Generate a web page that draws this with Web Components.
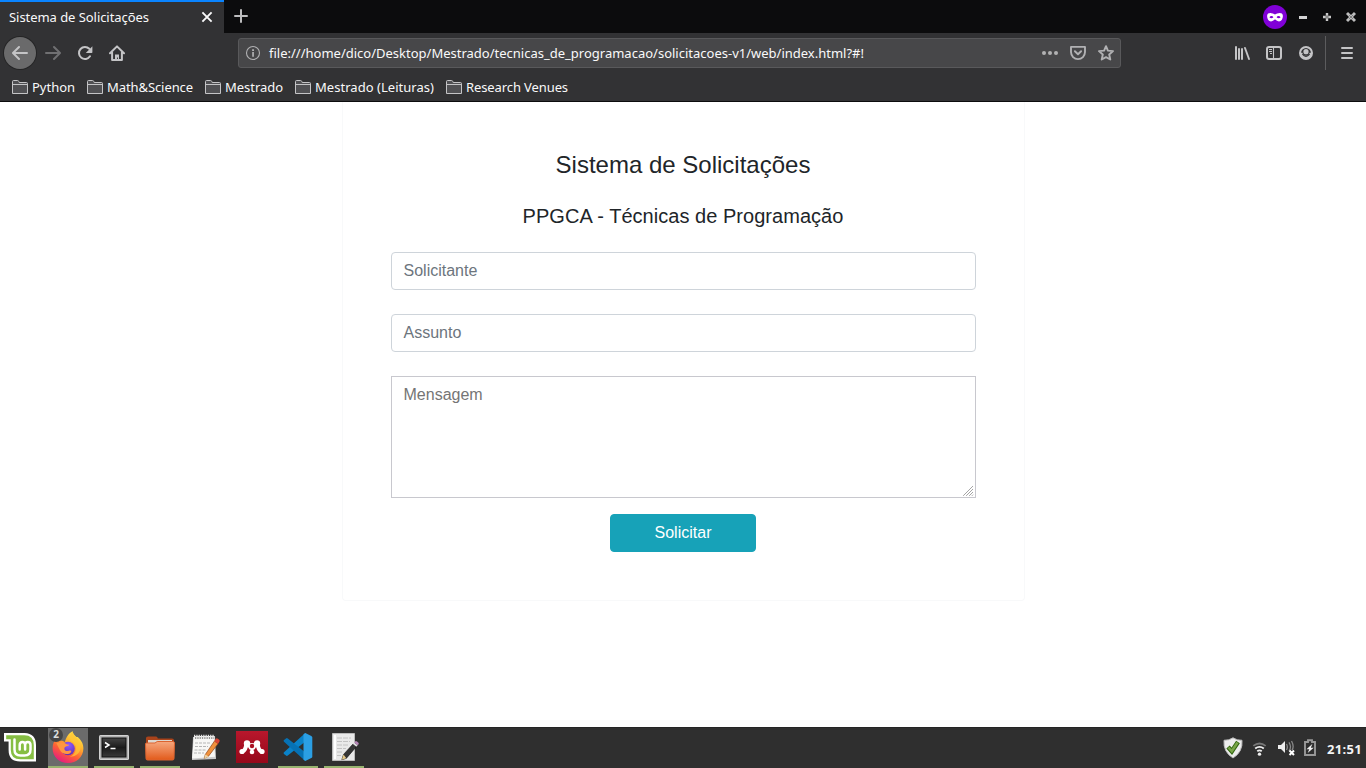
<!DOCTYPE html>
<html lang="pt-BR">
<head>
<meta charset="utf-8">
<title>Sistema de Solicitações</title>
<style>
html,body{margin:0;height:100%;overflow:hidden;background:#fff}
</style>
</head>
<body>
<desktop-screen></desktop-screen>
<script>
const ICONS = {
back:['0 0 16 16','<path fill="currentColor" d="M15 7H3.414l4.293-4.293a1 1 0 0 0-1.414-1.414l-6 6a1 1 0 0 0 0 1.414l6 6a1 1 0 0 0 1.414-1.414L3.414 9H15a1 1 0 0 0 0-2z"/>'],
forward:['0 0 16 16','<path fill="currentColor" d="M15.707 7.293l-6-6a1 1 0 0 0-1.414 1.414L12.586 7H1a1 1 0 0 0 0 2h11.586l-4.293 4.293a1 1 0 1 0 1.414 1.414l6-6a1 1 0 0 0 0-1.414z"/>'],
reload:['0 0 16 16','<path fill="none" stroke="currentColor" stroke-width="2" stroke-linecap="round" d="M12.300 3.800A6 6 0 1 0 13 11.300"/><path fill="currentColor" d="M15.400 1.200v6.100a.7.7 0 0 1-.7.7H8.800z"/>'],
home:['0 0 16 16','<path fill="none" stroke="currentColor" stroke-width="2" stroke-linecap="round" stroke-linejoin="round" d="M1 8.300 8 1.400l7 6.900M3.100 7.500V15h9.800V7.500"/><path fill="currentColor" d="M6 9.400h4V15H8.900v-2.400H8V15H6z"/>'],
info:['0 0 16 16','<circle cx="8" cy="8" r="6.500" fill="none" stroke="currentColor" stroke-width="1.100"/><path fill="currentColor" d="M7.200 7h1.700v4.700H7.200zM7.100 4.200h1.900v1.700H7.100z"/>'],
dots:['0 0 16 16','<g fill="currentColor"><circle cx="2" cy="8" r="2"/><circle cx="8" cy="8" r="2"/><circle cx="14" cy="8" r="2"/></g>'],
pocket:['0 0 16 16','<path fill="none" stroke="currentColor" stroke-width="1.900" stroke-linejoin="round" d="M1 1.900h14v5.200a7 7 0 0 1-14 0z"/><path fill="none" stroke="currentColor" stroke-width="1.900" stroke-linecap="round" stroke-linejoin="round" d="M4.900 6.200 8 9.200l3.100-3"/>'],
star:['0 0 16 16','<path fill="none" stroke="currentColor" stroke-width="1.900" stroke-linejoin="round" d="m8 1.200 1.900 4.400 5.100.5-3.800 3.400 1.100 5L8 12.100l-4.300 2.400 1.100-5L1 6.100l5.100-.5z"/>'],
library:['0 0 16 16','<path fill="none" stroke="currentColor" stroke-width="2" stroke-linecap="round" d="M2 2v12M5 4v10M8 4v10"/><path fill="none" stroke="currentColor" stroke-width="1.900" stroke-linecap="round" d="m11 3 4 11"/>'],
sidebar:['0 0 16 16','<rect x="1" y="2" width="14" height="12" rx="2" fill="none" stroke="currentColor" stroke-width="2"/><path stroke="currentColor" d="M7.500 2v12M3 4.500h3M3 6.500h3M4 8.500h2" stroke-width="1.100"/>'],
account:['0 0 16 16','<path fill="currentColor" fill-rule="evenodd" d="M8 1a7 7 0 1 0 0 14A7 7 0 0 0 8 1zM4.500 4.400A5 5 0 0 1 8 2.900a5 5 0 0 1 3.500 1.500 4.800 4.800 0 0 1 1.400 3.400h-1.300a3.700 3.700 0 0 1-7.200 0H3.100a4.800 4.800 0 0 1 1.400-3.400z"/><circle cx="8" cy="6.700" r="2.600" fill="currentColor"/><path fill="none" stroke="#323234" stroke-width="1.200" d="M4.400 9.200q3.600 4.200 7.200 0"/>'],
menu:['0 0 16 16','<path stroke="currentColor" stroke-width="2" stroke-linecap="round" d="M3 3h10M3 8h10M3 13h10"/>'],
close:['0 0 16 16','<path stroke="currentColor" stroke-width="1.900" d="m3.400 3.400 9.200 9.200M12.600 3.400l-9.200 9.200"/>'],
plus:['0 0 16 16','<path stroke="currentColor" stroke-width="2" stroke-linecap="round" d="M8 2v12M2 8h12"/>'],
folder:['0 0 16 16','<path fill="#505053" stroke="#c4c4c6" d="M.5 14.500v-12q0-1 1-1h4q1 0 1.300 1l.4 1h7.300q1 0 1 1v10z"/><path fill="none" stroke="#c4c4c6" d="M.5 5.500h15"/>'],
mask:['0 0 24 24','<circle cx="12" cy="12" r="12" fill="#8000d7"/><path fill="#fff" fill-rule="evenodd" d="M12 9.600C9.900 8 4.300 6.600 4.100 10.700c0 3.500 1.800 5.700 3.900 5.700 2.200 0 3-1.900 4-1.900s1.800 1.900 4 1.900c2.100 0 3.900-2.200 3.900-5.700C19.700 6.600 14.100 8 12 9.600zM6.400 12.200c1.100-1.700 3.100-1.700 4 .1-1 1.200-3 1.400-4-.1zm7.200.1c.9-1.800 2.900-1.800 4-.1-1 1.500-3 1.300-4 .1z"/>'],
wmin:['0 0 12 12','<path fill="#d4d4d4" d="M2 5h8v3H2z"/>'],
wmax:['0 0 12 12','<path fill="none" stroke="#c9c9c9" stroke-width="2.400" d="M6 2v8M2 6h8"/><path stroke="#444" stroke-width=".6" d="M6 4v4M4 6h4"/>'],
wclose:['0 0 12 12','<path fill="none" stroke="#bdbdbd" stroke-width="2.900" d="m2 2 8 8M10 2l-8 8"/><path stroke="#555" stroke-width=".6" d="m4 4 4 4M8 4 4 8"/>'],
mint:['0 0 32 30','<path fill="#fff" d="M0 1h20.500Q32 1.600 32 13v16.500H16Q4.600 29.500 4.600 18V9.500H0z"/><path fill="#86be43" d="M2.200 3.200h18Q29.800 3.200 29.800 13v14.300H16.500q-9.700 0-9.700-9.300V7.300H2.200z"/><path fill="none" stroke="#fff" stroke-width="2.500" stroke-linecap="round" d="M10.500 7.500v10q0 6 6 6h4q6 0 6-6v-4.500q0-3-2.700-3t-2.700 3v4.500M21.100 13q0-3-2.700-3t-2.700 3v4.500"/>'],
firefox:['0 0 32 32','<defs><linearGradient id="f" x1=".8" y1="0" x2=".25" y2="1"><stop offset="0" stop-color="#fff14f"/><stop offset=".35" stop-color="#ffb52e"/><stop offset=".65" stop-color="#ff5f35"/><stop offset="1" stop-color="#e31587"/></linearGradient><radialGradient id="p" cx=".55" cy=".25" r=".8"><stop offset="0" stop-color="#9059ff"/><stop offset="1" stop-color="#5b2fae"/></radialGradient></defs><path fill="url(#f)" d="M20.500.3c.4 2 1.700 4 4 5.700 1.200-.2 2 .4 3.200 2.100 2.100 2.500 3.700 5.300 3.700 9.100C31.400 26 24.500 32 16 32S.6 26 .6 17.500c0-4.300 1.300-7.200 3-9.500l.8 2 3.400-3.700.4 3.600c1.400-.4 3.400 0 4.600 1.400C13.900 7 16.200 2.500 20.500.3z"/><circle cx="16" cy="17.500" r="6.800" fill="url(#p)"/><path fill="#ff9640" d="M4.400 12.200q6-2.600 10.800 1.300l1.900.3c-.2 1.700-4.400 1.200-4.700 3.500-.4 2.700 2.500 3.300 4.500 2.400 1.400-.7 2.800.1 2.200 1.200-2.200 3.600-9.300 2.800-11.500-2.300z"/><path fill="#ffc637" d="M20.500.3q-4 4.300-1.700 9.600c4.500 1.500 6.300 5.500 4.700 10.100-1 3-3.500 5-6 5.700 7.500-.1 11.700-4.900 11-11.300-.5-5-6.300-7.700-8.000-14.100z" opacity=".75"/>'],
terminal:['0 0 32 28','<defs><linearGradient id="t" x2="0" y2="1"><stop stop-color="#444"/><stop offset=".5" stop-color="#1a1a1a"/><stop offset="1" stop-color="#3a3a3a"/></linearGradient></defs><rect x="1" y="2" width="30" height="25" rx="1.500" fill="#d2d2d2"/><rect x="2" y="3" width="28" height="23" fill="#b2b2b2"/><rect x="4" y="5" width="24" height="19" fill="url(#t)" stroke="#111"/><path fill="none" stroke="#fff" stroke-width="1.500" d="m7 9.500 4 2.500L7 14.500M12.500 15.500h5"/>'],
files:['0 0 32 28','<defs><linearGradient id="o" x2="0" y2="1"><stop stop-color="#f6a77d"/><stop offset=".6" stop-color="#ea7a44"/><stop offset="1" stop-color="#e25a1a"/></linearGradient></defs><path fill="#a9431a" d="M2 5q0-1.500 2-1.500h8q1.500 0 1.800 2H28q2 0 2 2V22H2z"/><path fill="#ddd6ce" d="M4 7h24v4H4z"/><path fill="url(#o)" stroke="#dc6430" d="M1.500 11q0-1 1-1H11l2.200-1.500H29q1.500 0 1.500 1.500L30 25.500q0 1.500-1.500 1.500h-25Q2 27 2 25.500z"/>'],
notes:['0 0 32 32','<path fill="#ccc" d="m3 6 22-1 1 23-24 1z"/><path fill="#f7f7f5" d="m4 5 20 .1 1 20.700-23 1.700z"/><path stroke="#b5b5b5" stroke-dasharray="3 1" d="M5 12h16M5 15.500h13M4.500 19H16M4 22h10"/><path stroke="#777" stroke-width="1.500" stroke-dasharray="1.300 1" d="M5 7h19"/><path stroke="#e3e3e3" stroke-width="2.500" stroke-dasharray="1.300 1" d="M4 5h20"/><path fill="#f0913c" stroke="#8e481d" stroke-width=".7" d="M15.300 23.500 24.500 10l3.500 2.700-9.500 12.500-4.300 2.200z"/><path fill="#d94634" d="m24.300 10 1.500-2.300q1-1 2.400.2l1 .8q1 1 .2 2L27.900 13z"/><path fill="#eed4a2" d="m15.300 23.500 3.200 1.900-4.300 2.300z"/>'],
mendeley:['0 0 32 32','<defs><linearGradient id="m" x2="0" y2="1"><stop stop-color="#b8172c"/><stop offset="1" stop-color="#96081a"/></linearGradient></defs><path fill="url(#m)" d="M0 0h32v32H0z"/><path fill="none" stroke="#fff" stroke-width="4" stroke-linecap="round" stroke-linejoin="round" d="M6.500 20.500q3.500-1.500 4-8.500l5.500 5 5.500-5q.5 7 4 8.500"/><g fill="#fff"><circle cx="11" cy="12.500" r="3.200"/><circle cx="21" cy="12.500" r="3.200"/><circle cx="16" cy="15.500" r="3.600"/><circle cx="6" cy="20.500" r="2.600"/><circle cx="16" cy="21" r="2.300"/><circle cx="26" cy="20.500" r="2.600"/></g><circle cx="16" cy="15" r="2.200" fill="#aa1022"/>'],
vscode:['0 0 32 32','<path fill="#0a82c8" d="M23.300 2 2 21.200q-1 .9 0 1.700l2 1.700q.9.600 1.800 0L24 10z"/><path fill="#0672b5" d="M23.300 30 2 10.800q-1-.9 0-1.700l2-1.700q.9-.6 1.800 0L24 22z"/><path fill="#2b9fe4" d="M21.500 28.800V3.200L23.300 2l6 2.900q1 .5 1 1.600v19q0 1.100-1 1.600l-6 2.900z"/>'],
editor:['0 0 32 32','<path fill="#e9e9e9" stroke="#bbb" d="M4.500 2.500h22v27h-22z"/><path fill="#fff" d="M6 4h2v24H6z"/><path stroke="#c2c2c2" stroke-dasharray="5 1" d="M9 7h14M9 10.500h13M9 14h11M9 17.500h9M9 21h6M9 24.500h4"/><path fill="#353535" stroke="#111" stroke-width=".6" d="M15.500 23.500 25 13l3.300 2.700-10 11.700-4.500 1.300z"/><path fill="#ddd" d="m25 13 1.300-1.500 3.300 2.700-1.300 1.500z"/><path fill="#b786b8" d="m26.300 11.500.8-1q.9-.8 1.900 0l1.400 1.200q.8.900 0 1.800l-.8.800z"/><path fill="#e6c987" d="m15.500 23.500 2.800 3.700-4.500 1.500z"/>'],
shield:['0 0 20 22','<path fill="#ededed" stroke="#bcbcbc" d="M10 .8Q6 3.500 1 3.300 0 15 10 21q10-6 9-17.700-5 .2-9-2.500z"/><path fill="none" stroke="#2f650d" stroke-width="4.500" d="m5 10 3.800 4.300L15 5"/><path fill="none" stroke="#79a548" stroke-width="2.600" d="m5.500 10.500 3.300 3.700L14.500 5.500"/>'],
wifi:['0 0 16 16','<g fill="none" stroke-width="2"><path stroke="#777" d="M1.400 5.200q6.600-5 13.200 0"/><path stroke="#eee" d="M3.400 8.100q4.600-3.600 9.200 0M5.600 10.900q2.400-1.800 4.800 0"/></g><circle cx="8" cy="14" r="1.800" fill="#eee"/>'],
sound:['0 0 18 18','<path fill="#ededed" d="M1 6h3l4-4v12l-4-4H1z"/><path fill="none" stroke="#888" stroke-width="1.300" d="M9.500 5q1.700 3 0 6M12 3.300q3 4.700 0 8.800M14.500 2q3 5.500.500 9"/><path stroke="#fff" stroke-width="2" d="m12.500 11.500 4.500 4.500M17 11.500 12.500 16"/>'],
battery:['0 0 14 18','<path fill="none" stroke="#999" stroke-width="1.900" d="M2 3h3V1.200h4V3h3v13H2z"/><path fill="#eee" d="m9.500 4.800-6 5.500h2.800L4.700 14l6-5.200H7.800z"/>'],
grip:['0 0 12 12','<path stroke="#666" stroke-width="1" stroke-dasharray="1 .42" d="M.5 10.500l9.500-9.500M3.500 10.500l6.500-6.500M6.500 10.500l3.500-3.500M9.200 10.500l.8-.8"/>']
};

function define(name, html, setup) {
  const template = document.createElement('template');
  template.innerHTML = html;
  customElements.define(name, class extends HTMLElement {
    connectedCallback() {
      if (this.shadowRoot) return;
      this.attachShadow({mode: 'open'}).append(template.content.cloneNode(true));
      if (setup) setup(this, this.shadowRoot);
    }
  });
}

define('ui-icon', `<style>:host{display:block;flex:none}svg{display:block;width:100%;height:100%}</style><svg></svg>`, (el, root) => {
  const [box, body] = ICONS[el.getAttribute('name')];
  const w = el.getAttribute('w') || 16;
  el.style.width = w + 'px';
  el.style.height = (el.getAttribute('h') || w) + 'px';
  const svg = root.querySelector('svg');
  svg.setAttribute('viewBox', box);
  svg.innerHTML = body;
});

/* A single line of interface text, tracked out to a given width. */
define('ui-label', `<style>:host{display:block;flex:none;white-space:nowrap}span{display:inline-block}</style><span><slot></slot></span>`, (el, root) => {
  const span = root.querySelector('span'), width = +el.getAttribute('width');
  span.style.letterSpacing = (width - span.getBoundingClientRect().width) / el.textContent.length + 'px';
  el.style.width = width + 'px';
});

define('tab-strip', `<style>
:host{display:flex;height:33px;background:#0c0c0d;color:#f9f9fa;align-items:stretch}
.tab{width:224px;box-sizing:border-box;border-top:2px solid #0a84ff;background:#323234;display:flex;align-items:center;justify-content:space-between;padding:0 9px 1px}
.new{display:flex;align-items:center;padding:0 0 1px 9px;color:#bdbdbe}
.controls{margin-left:auto;display:flex;align-items:center;gap:12px;padding:1px 9px 0 0}
.controls ui-icon:first-child{margin-right:-2px}
</style><div class="tab"><ui-label width="140">Sistema de Solicitações</ui-label><ui-icon name="close"></ui-icon></div>
<div class="new"><ui-icon name="plus"></ui-icon></div>
<div class="controls"><ui-icon name="mask" w="24"></ui-icon><ui-icon name="wmin" w="12"></ui-icon><ui-icon name="wmax" w="12"></ui-icon><ui-icon name="wclose" w="12"></ui-icon></div>`);

define('tool-button', `<style>:host{display:flex;width:32px;height:32px;align-items:center;justify-content:center;flex:none;box-sizing:border-box;border-radius:50%}:host([round]){background:#6a6a6b;box-shadow:0 0 0 1px #252526;margin-right:1px}:host([disabled]){color:#707072}</style>`, (el, root) => {
  const icon = document.createElement('ui-icon');
  icon.setAttribute('name', el.getAttribute('icon'));
  root.append(icon);
});

define('nav-bar', `<style>
:host{display:flex;height:40px;align-items:center;background:#323234;padding:0 3px 0 4px;color:#c4c4c6}
.url{margin:0 105px;flex:1;height:30px;box-sizing:border-box;background:#474749;border:1px solid #59595b;border-radius:3px;display:flex;align-items:center;padding:0 6px;color:#b1b1b3}
ui-label{color:#f9f9fa;margin-left:8px}
.actions{display:flex;gap:12px;margin-left:auto}
.rule{width:1px;height:34px;background:#5c5c5e;margin:0 5px 0 3px}
</style><tool-button icon="back" round></tool-button><tool-button icon="forward" disabled></tool-button><tool-button icon="reload"></tool-button><tool-button icon="home"></tool-button>
<div class="url"><ui-icon name="info"></ui-icon><ui-label width="595">file:///home/dico/Desktop/Mestrado/tecnicas_de_programacao/solicitacoes-v1/web/index.html?#!</ui-label><div class="actions"><ui-icon name="dots"></ui-icon><ui-icon name="pocket"></ui-icon><ui-icon name="star"></ui-icon></div></div>
<tool-button icon="library"></tool-button><tool-button icon="sidebar"></tool-button><tool-button icon="account"></tool-button><div class="rule"></div><tool-button icon="menu"></tool-button>`);

define('bookmark-bar', `<style>
:host{display:flex;height:29px;box-sizing:border-box;align-items:center;background:#323234;border-bottom:1px solid #0c0c0d;padding-left:12px;gap:12px}
div{display:flex;align-items:center;gap:4px}
</style>
<div><ui-icon name="folder"></ui-icon><ui-label width="43">Python</ui-label></div>
<div><ui-icon name="folder"></ui-icon><ui-label width="86">Math&amp;Science</ui-label></div>
<div><ui-icon name="folder"></ui-icon><ui-label width="58">Mestrado</ui-label></div>
<div><ui-icon name="folder"></ui-icon><ui-label width="119">Mestrado (Leituras)</ui-label></div>
<div><ui-icon name="folder"></ui-icon><ui-label width="102">Research Venues</ui-label></div>`);

define('form-field', `<style>
:host{display:block;margin-bottom:24px}
.box{display:grid;box-sizing:border-box;height:38px;border:1px solid #ced4da;border-radius:4px;padding:6px 12px;color:#6c757d;font:16px/24px "Liberation Sans",Arial,sans-serif}
:host([multiline]){margin-bottom:16px}
:host([multiline]) .box{height:122px;border-radius:0;border-color:#c8c8ce;color:#757575;padding:6px 0 0 12px}
ui-icon{display:none}
:host([multiline]) ui-icon{display:block;place-self:end}
</style><div class="box" role="textbox"><slot></slot><ui-icon name="grip" w="12"></ui-icon></div>`);

define('submit-button', `<style>
:host{display:block;width:25%;margin:0 auto}
button{display:block;width:100%;height:38px;border:1px solid #17a2b8;border-radius:4px;background:#17a2b8;color:#fff;padding:0;font:16px/24px "Liberation Sans",Arial,sans-serif}
</style><button type="button"><slot></slot></button>`);

define('request-form', `<style>
:host{display:block;box-sizing:border-box;width:683px;height:499px;margin:0 auto;border:1px solid #f8f9fa;border-top:0;border-radius:0 0 4px 4px;padding:48px 48px 48px;text-align:center;color:#212529;font-family:"Liberation Sans",Arial,sans-serif}
h1,h2{font-weight:400;margin:0 0 24px}
h1{font-size:24px;line-height:29px;margin-bottom:25px}
h2{font-size:20px;line-height:24px;letter-spacing:.035px}
form-field{text-align:left}
</style><h1>Sistema de Solicitações</h1><h2>PPGCA - Técnicas de Programação</h2>
<form-field>Solicitante</form-field><form-field>Assunto</form-field><form-field multiline>Mensagem</form-field><submit-button>Solicitar</submit-button>`);

define('task-item', `<style>
:host{display:flex;width:40px;height:40px;box-sizing:border-box;align-items:center;justify-content:center;position:relative;border-bottom:2px solid transparent;flex:none}
:host([open]){border-color:#97b36f}
:host([active]){background:#6b6b6b}
.badge{position:absolute;left:1px;top:0;width:14px;height:14px;border-radius:50%;background:#454545;color:#ddd;font:bold 10px/13px "Noto Sans",sans-serif;text-align:center}
.badge:empty{display:none}
</style><div class="pic"></div><div class="badge"></div>`, (el, root) => {
  const icon = document.createElement('ui-icon');
  for (const key of ['name', 'w', 'h']) if (el.hasAttribute(key)) icon.setAttribute(key, el.getAttribute(key));
  root.querySelector('.pic').append(icon);
  root.querySelector('.badge').textContent = el.getAttribute('count') || '';
});

define('task-bar', `<style>
:host{display:flex;height:41px;box-sizing:border-box;background:#2f2f2f;border-top:1px solid #252525;color:#f4f4f4}
.apps{display:flex;gap:6px}
.apps task-item:first-child{margin-right:2px}
.tray{display:flex;align-items:center;margin-left:auto;gap:9px;padding:0 4px 0 0}
ui-label{font-weight:700;padding-top:2px;margin-left:1px}
ui-icon[name=sound]{margin-right:-1px}
ui-icon[name=wifi]{margin-right:1px}
</style><div class="apps"><task-item name="mint" w="32" h="30"></task-item><task-item name="firefox" w="32" open active count="2"></task-item><task-item name="terminal" w="32" h="28" open></task-item><task-item name="files" w="32" h="28" open></task-item><task-item name="notes" w="32"></task-item><task-item name="mendeley" w="32"></task-item><task-item name="vscode" w="32" open></task-item><task-item name="editor" w="32" open></task-item></div>
<div class="tray"><ui-icon name="shield" w="20" h="22"></ui-icon><ui-icon name="wifi" w="15"></ui-icon><ui-icon name="sound" w="18"></ui-icon><ui-icon name="battery" w="14" h="18"></ui-icon><ui-label width="35">21:51</ui-label></div>`);

define('desktop-screen', `<style>
:host{display:flex;flex-direction:column;width:1366px;height:768px;font:13px/18px "Noto Sans",sans-serif;overflow:hidden}
tab-strip,nav-bar,bookmark-bar,task-bar{flex:none}
tab-strip,bookmark-bar{color:#f9f9fa}
main{flex:1;background:#fff}
</style><tab-strip></tab-strip><nav-bar></nav-bar><bookmark-bar></bookmark-bar><main><request-form></request-form></main><task-bar></task-bar>`);
</script>
</body>
</html>
